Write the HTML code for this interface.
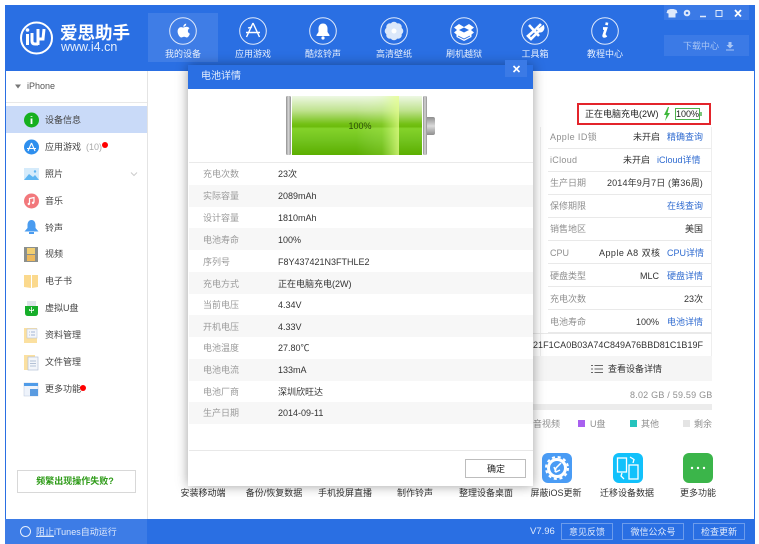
<!DOCTYPE html>
<html lang="zh"><head><meta charset="utf-8"><title>爱思助手</title>
<style>
html,body{margin:0;padding:0;background:#fff}
body{width:759px;height:544px;position:relative;overflow:hidden;font-family:"Liberation Sans","Noto Sans CJK SC",sans-serif;font-size:9px;color:#333}
#w{position:absolute;left:0;top:0;width:759px;height:544px;overflow:hidden;filter:blur(.3px)}
.a{position:absolute;white-space:nowrap;line-height:12px}
.c{transform:translateX(-50%);text-align:center}
.b{position:absolute}
.g{color:#8f8f8f}
.l{color:#2f6bd0}
svg{position:absolute;overflow:visible}
.t{color:#e6effd;top:48px}
.s{color:#333}
.m{left:45px;color:#444}
.q{color:#9a9a9a}
</style></head><body><div id="w">
<!-- window -->
<div class="b" style="left:5px;top:5px;width:750px;height:539px;background:#fff;border-left:1px solid #2a6fe3;border-right:1px solid #2a6fe3;box-sizing:border-box"></div>
<div class="b" style="left:5px;top:5px;width:750px;height:66px;background:#2a6fe3"></div>
<div class="b" style="left:148px;top:13px;width:70px;height:49px;background:#3f7de6"></div>
<!-- logo -->
<svg style="left:0;top:0" width="140" height="60"><circle cx="36.500" cy="38" r="15.500" fill="none" stroke="#fff" stroke-width="2"/>
<path d="M27.500 34v11M32 33v8q0 3 3 3h3M38 29v16M44 29l-1 10h-6" fill="none" stroke="#fff" stroke-width="3"/><circle cx="27.500" cy="30" r="1.800" fill="#fff"/></svg>
<div class="a" style="left:60px;top:23px;font-size:17.500px;line-height:20px;font-weight:700;color:#fff">爱思助手</div>
<div class="a" style="left:61px;top:41px;font-size:12.500px;color:#e6effc">www.i4.cn</div>
<!-- nav icons -->
<svg style="left:0;top:.5px" width="759" height="60" fill="none" stroke="#dfe9fb" stroke-width="1">
<circle cx="183" cy="30" r="13.300"/><circle cx="253" cy="30" r="13.300"/><circle cx="323" cy="30" r="13.300"/><circle cx="394" cy="30" r="13.300"/><circle cx="464" cy="30" r="13.300"/><circle cx="535" cy="30" r="13.300"/><circle cx="605" cy="30" r="13.300"/>
<path d="M183.500 26.500c1-.2 2.800-1 3.800-.6 1 .2 1.700.8 2.200 1.400-2.400 1.500-2 4.500.4 5.500-.6 1.700-1.800 3.700-3 3.700-1 0-1.500-.7-2.800-.7s-1.800.7-2.800.7c-1.700 0-3.700-3.500-3.700-6 0-3 1.900-4.400 3.500-4.400 1 0 1.600.4 2.400.4zM183.300 25.800c0-1.700 1.300-3 2.900-3.200.1 1.800-1.300 3.200-2.900 3.200z" fill="#fff" stroke="none"/>
<path d="M253 22l-6.500 14M253 22l6.500 14M246 31.500h14M252 26l-4 1" stroke="#fff" stroke-width="1.400"/>
<path d="M323 22.500c-3 0-4.500 2.500-4.500 5v3.500l-2 3v1h13v-1l-2-3v-3.500c0-2.500-1.500-5-4.500-5z" fill="#fff" stroke="none"/><circle cx="323" cy="37" r="1.600" fill="#fff" stroke="none"/>
<g fill="#dce8fa" stroke="none"><circle cx="394" cy="24.500" r="3.800"/><circle cx="394" cy="35.500" r="3.800"/><circle cx="388.500" cy="30" r="3.800"/><circle cx="399.500" cy="30" r="3.800"/><circle cx="390" cy="26" r="3.800"/><circle cx="398" cy="26" r="3.800"/><circle cx="390" cy="34" r="3.800"/><circle cx="398" cy="34" r="3.800"/><circle cx="394" cy="30" r="2.500" fill="#fff"/></g>
<path d="M459 23l5 3 5-3 5 3.500-3 2.500 3 2.500-2.500 2v2.500l-7.500 4-7.500-4v-2.500l-2.500-2 3-2.500-3-2.500z" fill="#fff" stroke="none"/><path d="M459 29l5-2.500 5 2.500-5 2.500z" fill="#2a6fe3" stroke="none"/><path d="M458 35l6 3 6-3" stroke="#2a6fe3" stroke-width=".8"/>
<path d="M529 24l10 11M541 23l-4 4 2 2 4-3c.5 2-1 5-4 4l-8 8-3-3 8-7" stroke="#fff" stroke-width="2.600"/>
<path d="M607 21.500l-.5 2.600M603 27.500h3l-2.300 7c-.3 1 .5 1.500 2.800 0" stroke="#fff" stroke-width="2.700"/>
</svg>
<div class="a c t" style="left:183px">我的设备</div><div class="a c t" style="left:253px">应用游戏</div><div class="a c t" style="left:323px">酷炫铃声</div><div class="a c t" style="left:394px">高清壁纸</div><div class="a c t" style="left:464px">刷机越狱</div><div class="a c t" style="left:535px">工具箱</div><div class="a c t" style="left:605px">教程中心</div>
<!-- window controls -->
<div class="b" style="left:664px;top:5px;width:85px;height:15px;background:#3b7ae6"></div>
<svg style="left:664px;top:6px" width="85" height="15" fill="none" stroke="#dfe9fb">
<path d="M3.500 4l3-1h3l3 1 1 3-2 .5v4h-7v-4l-2-.5z" fill="#dfe9fb" stroke="none"/><circle cx="23" cy="7" r="2.300" stroke-width="2"/><path d="M36 10.500h6" stroke-width="1.500"/><rect x="52" y="4.500" width="6" height="6"/><path d="M71 4l6 6.500M77 4l-6 6.500" stroke-width="1.700" stroke="#fff"/></svg>
<div class="b" style="left:664px;top:35px;width:85px;height:21px;background:#3b7ae6"></div>
<div class="a" style="left:683px;top:40px;color:#a9c6f5">下载中心</div>
<svg style="left:725px;top:41px" width="10" height="10" fill="#a9c6f5"><path d="M3.500 1h3v3h2L5 7.500 1.500 4h2zM1 8.500h8v1H1z"/></svg>
<!-- sidebar -->
<div class="b" style="left:147px;top:71px;width:1px;height:448px;background:#e4e4e4"></div>
<svg style="left:15px;top:84px" width="6" height="5"><path d="M0 .5h6L3 4.500z" fill="#777"/></svg>
<div class="a" style="left:27px;top:80px;color:#555">iPhone</div>
<div class="b" style="left:6px;top:102px;width:141px;height:1px;background:#e8e8e8"></div>
<div class="b" style="left:6px;top:106px;width:141px;height:27px;background:#c9daf8"></div>
<div class="a m" style="top:114px">设备信息</div>
<div class="a m" style="top:141px">应用游戏 <span style="color:#aaa">&nbsp;(10)</span></div>
<div class="b" style="left:102px;top:142px;width:6px;height:6px;border-radius:50%;background:#f00"></div>
<div class="a m" style="top:168px">照片</div>
<svg style="left:130px;top:172px" width="8" height="5" fill="none" stroke="#ccc"><path d="M1 .5l3 3 3-3"/></svg>
<div class="a m" style="top:195px">音乐</div>
<div class="a m" style="top:222px">铃声</div>
<div class="a m" style="top:248px">视频</div>
<div class="a m" style="top:275px">电子书</div>
<div class="a m" style="top:302px">虚拟U盘</div>
<div class="a m" style="top:329px">资料管理</div>
<div class="a m" style="top:356px">文件管理</div>
<div class="a m" style="top:383px">更多功能</div>
<div class="b" style="left:80px;top:385px;width:6px;height:6px;border-radius:50%;background:#f00"></div>
<svg style="left:0;top:0" width="60" height="410">
<circle cx="31.500" cy="120" r="7.500" fill="#16b01e"/><path d="M31.500 116v.8M31.500 118.500v5.500" stroke="#fff" stroke-width="1.800"/>
<circle cx="31.500" cy="147" r="7.500" fill="#2e8fee"/><path d="M31.500 143l-3.500 8M31.500 143l3.500 8M27 148.500h9" stroke="#fff" stroke-width="1.100" fill="none"/>
<rect x="24" y="168" width="15" height="12" fill="#d5ebfb"/><path d="M24 180l5-6 4 3 2-2 4 5z" fill="#5db5f2"/><circle cx="35" cy="171.500" r="1.200" fill="#5db5f2"/>
<circle cx="31.500" cy="201" r="7.500" fill="#f2787c"/><path d="M29.500 204v-5.500l4.500-1v5" fill="none" stroke="#fff" stroke-width="1.200"/><circle cx="28.800" cy="204" r="1.200" fill="#fff"/><circle cx="33" cy="202.800" r="1.200" fill="#fff"/>
<path d="M31.500 220c-3 0-4 3-4 5v3l-3 3.500h14l-3-3.500v-3c0-2-1-5-4-5z" fill="#4a9cf0"/><rect x="29" y="232" width="5" height="2" fill="#4a9cf0"/>
<rect x="24" y="247" width="14" height="15" fill="#8b8f8c"/><rect x="27" y="248" width="8" height="6" fill="#f2cf72"/><rect x="27" y="255" width="8" height="6" fill="#eeb95c"/>
<path d="M24 275h7v13l-7-1zM38 275h-6v13l6-1z" fill="#fbd98d"/>
<rect x="27" y="301" width="9" height="5" fill="#dfe5ea"/><path d="M25 306h13v7q0 3-3 3h-7q-3 0-3-3z" fill="#16ae2a"/><path d="M31.500 307v6M29.500 309v1.500h4V309" stroke="#fff" fill="none" stroke-width=".8"/>
<rect x="24" y="328" width="13" height="15" fill="#fbe0a0"/><rect x="27" y="329" width="10" height="9" fill="#f4f6fa" stroke="#b9c7de" stroke-width=".6"/><path d="M29 332h.8M31 332h4M29 335h.8M31 335h4" stroke="#8aa2c9" stroke-width=".7"/>
<rect x="24" y="355" width="11" height="15" fill="#fbe0a0"/><rect x="28" y="357" width="10" height="13" fill="#f3f6fa" stroke="#b4c1d6" stroke-width=".7"/><path d="M30 361h6M30 363.500h6M30 366h6" stroke="#9fb0c9" stroke-width=".7"/>
<rect x="24" y="383" width="14" height="13" fill="#eef3fb" stroke="#b9c7de" stroke-width=".5"/><rect x="24" y="383" width="14" height="3" fill="#4f9be8"/><rect x="30" y="389" width="8" height="7" fill="#5a9be0"/>
</svg>
<div class="b" style="left:17px;top:470px;width:119px;height:23px;border:1px solid #d8d8d8;box-sizing:border-box"></div>
<div class="a c" style="left:75px;top:475px;color:#2c9a16;font-weight:700">频繁出现操作失败?</div>
<!-- main right -->
<div class="b" style="left:540px;top:127px;width:172px;height:254px;border-left:1px solid #eee;border-right:1px solid #eee;box-sizing:border-box"></div>
<div class="b" style="left:548px;top:148px;width:163px;height:185px;background:repeating-linear-gradient(to bottom,#e9e9e9 0,#e9e9e9 1px,transparent 1px,transparent 23px)"></div>
<div class="b" style="left:533px;top:333px;width:179px;height:1px;background:#e9e9e9"></div>
<div class="b" style="left:533px;top:356px;width:179px;height:25px;background:#f5f5f5"></div>
<div class="b" style="left:577px;top:103px;width:134px;height:22px;border:2px solid #e3242b;box-sizing:border-box"></div>
<div class="a" style="left:585px;top:108px;color:#222">正在电脑充电(2W)</div>
<svg style="left:663px;top:107px" width="8" height="14"><path d="M5 0L1 8h2.500L2 14l5-8H4.500L6 0z" fill="#3fb83c"/></svg>
<div class="b" style="left:675px;top:108px;width:25px;height:12px;border:1px solid #4db04d;box-sizing:border-box"></div>
<div class="a" style="left:676px;top:108px;color:#222">100%</div>
<div class="b" style="left:700px;top:112px;width:2px;height:4px;background:#7cc67c"></div>
<div class="a g" style="left:550px;top:131px;letter-spacing:.4px">Apple ID锁</div><div class="a s" style="left:633px;top:131px">未开启</div><div class="a l" style="left:667px;top:131px">精确查询</div>
<div class="a g" style="left:550px;top:154px;letter-spacing:.3px">iCloud</div><div class="a s" style="left:623px;top:154px">未开启</div><div class="a l" style="left:657px;top:154px">iCloud详情</div>
<div class="a g" style="left:550px;top:177px">生产日期</div><div class="a s" style="left:607px;top:177px;letter-spacing:.15px">2014年9月7日 (第36周)</div>
<div class="a g" style="left:550px;top:200px">保修期限</div><div class="a l" style="left:667px;top:200px">在线查询</div>
<div class="a g" style="left:550px;top:223px">销售地区</div><div class="a s" style="left:685px;top:223px">美国</div>
<div class="a g" style="left:550px;top:247px">CPU</div><div class="a s" style="left:599px;top:247px;letter-spacing:.45px">Apple A8 双核</div><div class="a l" style="left:667px;top:247px">CPU详情</div>
<div class="a g" style="left:550px;top:270px">硬盘类型</div><div class="a s" style="left:640px;top:270px">MLC</div><div class="a l" style="left:667px;top:270px">硬盘详情</div>
<div class="a g" style="left:550px;top:293px">充电次数</div><div class="a s" style="left:684px;top:293px">23次</div>
<div class="a g" style="left:550px;top:316px">电池寿命</div><div class="a s" style="left:636px;top:316px">100%</div><div class="a l" style="left:667px;top:316px">电池详情</div>
<div class="a s" style="left:533px;top:339px;letter-spacing:.03px">21F1CA0B03A74C849A76BBD81C1B19F</div>
<svg style="left:591px;top:364px" width="12" height="10" stroke="#666" fill="none"><path d="M3.500 1.500H12M3.500 5H12M3.500 8.500H12M0 1.500h2M0 5h2M0 8.500h2"/></svg>
<div class="a" style="left:608px;top:363px;color:#333">查看设备详情</div>
<div class="a g" style="left:630px;top:389px;letter-spacing:.22px">8.02 GB / 59.59 GB</div>
<div class="b" style="left:533px;top:404px;width:179px;height:6px;background:#ececec"></div>
<div class="a g" style="left:533px;top:418px">音视频</div>
<div class="b" style="left:578px;top:420px;width:7px;height:7px;background:#a860ef"></div><div class="a g" style="left:590px;top:418px">U盘</div>
<div class="b" style="left:630px;top:420px;width:7px;height:7px;background:#25c3bd"></div><div class="a g" style="left:641px;top:418px">其他</div>
<div class="b" style="left:683px;top:420px;width:7px;height:7px;background:#e4e4e4"></div><div class="a g" style="left:694px;top:418px">剩余</div>
<!-- bottom tools -->
<svg style="left:540px;top:451px" width="175" height="34">
<rect x="2" y="2" width="30" height="30" rx="6" fill="#4a9cf5"/><circle cx="17" cy="17" r="8.500" fill="none" stroke="#fff" stroke-width="3"/><circle cx="17" cy="17" r="11" fill="none" stroke="#fff" stroke-width="2" stroke-dasharray="3 2.800"/><path d="M21 12l-5 5-1 4M14 16l2 5 4-2" stroke="#fff" stroke-width="1.500" fill="none"/>
<rect x="73" y="2" width="30" height="30" rx="6" fill="#12c1fb"/><rect x="77.500" y="7" width="9" height="14" fill="none" stroke="#fff" stroke-width="1.300"/><rect x="89" y="14" width="9" height="14" fill="none" stroke="#fff" stroke-width="1.300"/><path d="M90 6l4 2.500-1 3.500M84 28l-3-3 1-3" stroke="#fff" stroke-width="1.300" fill="none"/>
<rect x="143" y="2" width="30" height="30" rx="6" fill="#3bb54a"/><circle cx="152" cy="17" r="1.200" fill="#fff"/><circle cx="158" cy="17" r="1.200" fill="#fff"/><circle cx="164" cy="17" r="1.200" fill="#fff"/></svg>
<div class="a c" style="left:203px;top:487px">安装移动端</div><div class="a c" style="left:274px;top:487px">备份/恢复数据</div><div class="a c" style="left:345px;top:487px">手机投屏直播</div><div class="a c" style="left:415px;top:487px">制作铃声</div><div class="a c" style="left:486px;top:487px">整理设备桌面</div><div class="a c" style="left:556px;top:487px">屏蔽iOS更新</div><div class="a c" style="left:627px;top:487px">迁移设备数据</div><div class="a c" style="left:698px;top:487px">更多功能</div>
<!-- footer -->
<div class="b" style="left:5px;top:519px;width:750px;height:25px;background:#2a6fe3"></div>
<div class="b" style="left:5px;top:519px;width:142px;height:25px;background:#3d7ce6"></div>
<div class="b" style="left:20px;top:526px;width:11px;height:11px;border:1px solid #e4edfc;border-radius:50%;box-sizing:border-box"></div>
<div class="a" style="left:36px;top:526px;color:#e0eafc"><u>阻止</u>iTunes自动运行</div>
<div class="a" style="left:530px;top:526px;color:#e0eafc;font-size:9.500px">V7.96</div>
<div class="a c" style="left:587px;top:523px;width:52px;height:17px;line-height:16px;border:1px solid #6c9cec;box-sizing:border-box;color:#e0eafc">意见反馈</div>
<div class="a c" style="left:653px;top:523px;width:62px;height:17px;line-height:16px;border:1px solid #6c9cec;box-sizing:border-box;color:#e0eafc">微信公众号</div>
<div class="a c" style="left:719px;top:523px;width:52px;height:17px;line-height:16px;border:1px solid #6c9cec;box-sizing:border-box;color:#e0eafc">检查更新</div>
<!-- modal -->
<div class="b" style="left:188px;top:65px;width:345px;height:421px;background:#fff;box-shadow:0 0 11px rgba(0,0,0,.38)"></div>
<div class="b" style="left:188px;top:65px;width:345px;height:24px;background:#2a6fe3"></div>
<div class="b" style="left:505px;top:60px;width:22px;height:17px;background:#3b7ae6"></div>
<svg style="left:512px;top:65px" width="9" height="9" stroke="#fff" stroke-width="1.600"><path d="M1.500 1l6 6M7.500 1l-6 6"/></svg>
<div class="a" style="left:201px;top:71px;color:#e3edfc;font-size:10px">电池详情</div>
<svg style="left:286px;top:96px" width="150" height="60">
<defs>
<linearGradient id="v" x1="0" y1="0" x2="0" y2="1"><stop offset="0" stop-color="#eef8e4"/><stop offset=".25" stop-color="#bfe28e"/><stop offset=".47" stop-color="#74c116"/><stop offset=".52" stop-color="#6cbb0c"/><stop offset=".55" stop-color="#84d22a"/><stop offset=".75" stop-color="#72c31e"/><stop offset="1" stop-color="#5bae00"/></linearGradient>
<linearGradient id="h" x1="0" y1="0" x2="1" y2="0"><stop offset="0" stop-color="#fff" stop-opacity="0"/><stop offset=".6" stop-color="#d8ff90" stop-opacity=".15"/><stop offset="1" stop-color="#e6ff8a" stop-opacity=".75"/></linearGradient>
<linearGradient id="k" x1="0" y1="0" x2="1" y2="0"><stop offset="0" stop-color="#8f8f8f"/><stop offset=".5" stop-color="#d8d8d8"/><stop offset="1" stop-color="#8f8f8f"/></linearGradient>
<linearGradient id="n" x1="0" y1="0" x2="0" y2="1"><stop offset="0" stop-color="#8e8e8e"/><stop offset=".5" stop-color="#dadada"/><stop offset="1" stop-color="#8e8e8e"/></linearGradient>
</defs>
<rect x="5" y="0" width="132" height="59" fill="url(#v)"/>
<rect x="70" y="0" width="43" height="59" fill="url(#h)"/>
<rect x="0" y="0" width="5" height="59" rx="1.500" fill="url(#k)"/><rect x="5" y="0" width="1" height="59" fill="#fff"/>
<rect x="136" y="0" width="1" height="59" fill="#fff"/><rect x="137" y="0" width="4" height="59" rx="1.500" fill="url(#k)"/>
<path d="M141 21h6q2 0 2 2v14q0 2-2 2h-6z" fill="url(#n)"/>
</svg>
<div class="a c" style="left:360px;top:120px;color:#2c4d08">100%</div>
<div class="b" style="left:189px;top:162px;width:344px;height:1px;background:#eaeaea"></div>
<div class="b" style="left:189px;top:185px;width:344px;height:22px;background:#f7f7f7"></div>
<div class="b" style="left:189px;top:228px;width:344px;height:22px;background:#f7f7f7"></div>
<div class="b" style="left:189px;top:272px;width:344px;height:22px;background:#f7f7f7"></div>
<div class="b" style="left:189px;top:315px;width:344px;height:22px;background:#f7f7f7"></div>
<div class="b" style="left:189px;top:359px;width:344px;height:22px;background:#f7f7f7"></div>
<div class="b" style="left:189px;top:402px;width:344px;height:22px;background:#f7f7f7"></div>
<div class="a q" style="left:203px;top:168px">充电次数</div><div class="a" style="left:278px;top:168px">23次</div>
<div class="a q" style="left:203px;top:190px">实际容量</div><div class="a" style="left:278px;top:190px">2089mAh</div>
<div class="a q" style="left:203px;top:212px">设计容量</div><div class="a" style="left:278px;top:212px">1810mAh</div>
<div class="a q" style="left:203px;top:234px">电池寿命</div><div class="a" style="left:278px;top:234px">100%</div>
<div class="a q" style="left:203px;top:256px">序列号</div><div class="a" style="left:278px;top:256px">F8Y437421N3FTHLE2</div>
<div class="a q" style="left:203px;top:278px">充电方式</div><div class="a" style="left:278px;top:278px">正在电脑充电(2W)</div>
<div class="a q" style="left:203px;top:299px">当前电压</div><div class="a" style="left:278px;top:299px">4.34V</div>
<div class="a q" style="left:203px;top:321px">开机电压</div><div class="a" style="left:278px;top:321px">4.33V</div>
<div class="a q" style="left:203px;top:342px">电池温度</div><div class="a" style="left:278px;top:342px">27.80℃</div>
<div class="a q" style="left:203px;top:364px">电池电流</div><div class="a" style="left:278px;top:364px">133mA</div>
<div class="a q" style="left:203px;top:386px">电池厂商</div><div class="a" style="left:278px;top:386px">深圳欣旺达</div>
<div class="a q" style="left:203px;top:407px">生产日期</div><div class="a" style="left:278px;top:407px">2014-09-11</div>
<div class="b" style="left:189px;top:450px;width:344px;height:1px;background:#e8e8e8"></div>
<div class="b" style="left:465px;top:459px;width:61px;height:19px;border:1px solid #bdbdbd;box-sizing:border-box"></div>
<div class="a c" style="left:496px;top:463px;color:#222">确定</div>
</div></body></html>
